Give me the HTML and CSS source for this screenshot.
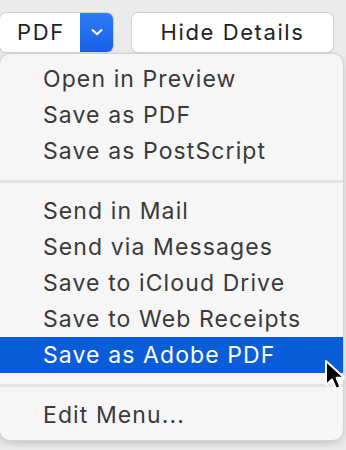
FILE: index.html
```html
<!doctype html>
<html lang="en">
<head>
	<meta charset="utf-8" />
	<title>PDF Menu</title>
	<link rel="stylesheet" href="styles.css">
</head>
<body>

	<!-- BEGIN: Toolbar. -->
	<div class="toolbar">
		<div class="pdf-button">
			<span class="pdf-button__label">PDF</span>
			<span class="pdf-button__arrow">
				<svg width="14" height="9" viewBox="0 0 14 9">
					<path d="M2.5 2 L7 6.2 L11.5 2" fill="none" stroke="#ffffff" stroke-width="2" stroke-linecap="round" stroke-linejoin="round" />
				</svg>
			</span>
		</div>
		<div class="push-button">Hide Details</div>
	</div>
	<!-- END: Toolbar. -->

	<!-- BEGIN: Menu. -->
	<ul class="menu">
		<li class="menu__item">Open in Preview</li>
		<li class="menu__item">Save as PDF</li>
		<li class="menu__item">Save as PostScript</li>
		<li class="menu__separator"></li>
		<li class="menu__item">Send in Mail</li>
		<li class="menu__item">Send via Messages</li>
		<li class="menu__item">Save to iCloud Drive</li>
		<li class="menu__item">Save to Web Receipts</li>
		<li class="menu__item menu__item--selected">Save as Adobe PDF</li>
		<li class="menu__separator"></li>
		<li class="menu__item">Edit Menu...</li>
	</ul>
	<!-- END: Menu. -->

	<svg class="cursor" width="26" height="36" viewBox="0 0 26 36">
		<path d="M2 2 L2 26 L8 20.5 L12 30 L16.5 28 L12.5 18.8 L20 18.5 Z" fill="#000000" stroke="#ffffff" stroke-width="2" stroke-linejoin="round" />
	</svg>

</body>
</html>
```

FILE: styles.css
```css
html {
	box-sizing: border-box ;
}

*, *:before, *:after {
	box-sizing: inherit ;
}

body {
	background-color: #ebebeb ;
	font-family: "Inter", "Liberation Sans", sans-serif ;
	height: 450px ;
	margin: 0px 0px 0px 0px ;
	overflow: hidden ;
	position: relative ;
}

/* BEGIN: Toolbar. */
.toolbar {
	display: flex ;
	gap: 19px ;
	padding: 13px 0px 0px 0px ;
}

.pdf-button {
	background-color: #ffffff ;
	border-radius: 6px ;
	box-shadow: 0px 0px 0px 1px #d0d0d0, 0px 1px 1px rgba( 0, 0, 0, 0.12 ) ;
	display: flex ;
	height: 39px ;
	width: 113px ;
}

.pdf-button__label {
	color: #222222 ;
	flex: 1 1 auto ;
	font-size: 22px ;
	letter-spacing: 1.6px ;
	line-height: 39px ;
	padding: 0px 0px 0px 17px ;
}

.pdf-button__arrow {
	align-items: center ;
	background: linear-gradient( #2f7cf6, #1560e6 ) ;
	border-radius: 0px 6px 6px 0px ;
	display: flex ;
	flex: 0 0 auto ;
	justify-content: center ;
	width: 33px ;
}

.push-button {
	background-color: #ffffff ;
	border-radius: 6px ;
	box-shadow: 0px 0px 0px 1px #d0d0d0, 0px 1px 1px rgba( 0, 0, 0, 0.12 ) ;
	color: #222222 ;
	font-size: 22px ;
	height: 39px ;
	letter-spacing: 1.6px ;
	line-height: 39px ;
	text-align: center ;
	width: 201px ;
}
/* END: Toolbar. */

/* BEGIN: Menu. */
.menu {
	background-color: #f6f6f6 ;
	border-radius: 10px ;
	box-shadow: 0px 0px 0px 1px #d6d6d6, 0px 3px 8px rgba( 0, 0, 0, 0.18 ) ;
	list-style: none ;
	margin: 2px 0px 0px 0px ;
	padding: 7px 0px 7px 0px ;
	width: 343px ;
}

.menu__item {
	color: #3a3a3a ;
	font-size: 23px ;
	height: 36px ;
	letter-spacing: 1.1px ;
	line-height: 36px ;
	padding: 0px 0px 0px 43px ;
}

.menu__item--selected {
	background-color: #0b5cd8 ;
	color: #ffffff ;
}

.menu__separator {
	background-color: #e4e4e4 ;
	height: 3px ;
	margin: 11px 0px 10px 0px ;
}
/* END: Menu. */

.cursor {
	left: 324px ;
	position: absolute ;
	top: 359px ;
}
```
